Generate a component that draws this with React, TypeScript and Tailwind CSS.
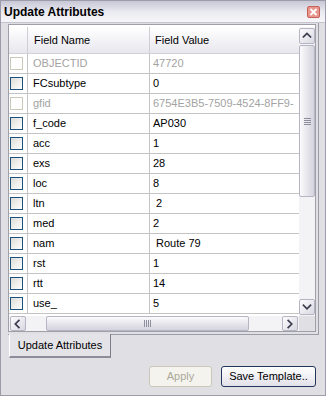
import React from 'react';

type Row = { name: string; value: string; disabled?: boolean };

const rows: Row[] = [
  { name: 'OBJECTID', value: '47720', disabled: true },
  { name: 'FCsubtype', value: '0' },
  { name: 'gfid', value: '6754E3B5-7509-4524-8FF9-', disabled: true },
  { name: 'f_code', value: 'AP030' },
  { name: 'acc', value: '1' },
  { name: 'exs', value: '28' },
  { name: 'loc', value: '8' },
  { name: 'ltn', value: ' 2' },
  { name: 'med', value: '2' },
  { name: 'nam', value: ' Route 79' },
  { name: 'rst', value: '1' },
  { name: 'rtt', value: '14' },
  { name: 'use_', value: '5' },
];

function Chevron({ dir }: { dir: 'up' | 'down' | 'left' | 'right' }) {
  const d = {
    up: 'M4 9 L8 5 L12 9',
    down: 'M4 6 L8 10 L12 6',
    left: 'M9 4 L5 8 L9 12',
    right: 'M6 4 L10 8 L6 12',
  }[dir];
  return (
    <svg width="16" height="16" viewBox="0 0 16 16" fill="none">
      <path d={d} stroke="#3c3c4e" strokeWidth="2" strokeLinecap="square" />
    </svg>
  );
}

function ScrollButton({ dir, className = '' }: { dir: 'up' | 'down' | 'left' | 'right'; className?: string }) {
  return (
    <div
      className={`flex items-center justify-center rounded-[2px] border border-[#b6b5c3] bg-gradient-to-br from-[#fdfdfe] to-[#d9d8e2] ${className}`}
    >
      <Chevron dir={dir} />
    </div>
  );
}

function Checkbox({ disabled }: { disabled?: boolean }) {
  return disabled ? (
    <div className="w-[13px] h-[13px] border border-[#cac8bb] bg-white" />
  ) : (
    <div className="w-[13px] h-[13px] border border-[#1c5180] bg-gradient-to-br from-[#dcdcd7] to-white" />
  );
}

export default function App() {
  return (
    <div className="w-[326px] h-[396px] bg-[#e0dfe3] border border-[#9d9cab] flex flex-col overflow-hidden font-['Liberation_Sans',Arial,sans-serif] text-[11px] text-black">
      {/* title bar */}
      <div className="h-[22px] flex items-center justify-between pl-[3px] pr-[5px] bg-gradient-to-b from-[#c8c7d6] via-[#e9e9f0] to-[#f7f7fa] border-b border-[#c4c3d0]">
        <span className="text-[12px] font-bold leading-none">Update Attributes</span>
        <div className="w-[13px] h-[12px] rounded-[2px] border border-[#c8605a] bg-[#e8958c] flex items-center justify-center">
          <svg width="9" height="8" viewBox="0 0 9 8">
            <path d="M1.5 1 L7.5 7 M7.5 1 L1.5 7" stroke="white" strokeWidth="1.8" />
          </svg>
        </div>
      </div>

      {/* tab page */}
      <div className="ml-[7px] w-[311px] pt-[1px] pb-[2px] pr-[1px] border-r border-b border-[#9c9ba8]">
        <div className="w-[308px] h-[308px] border border-[#9f9fa8] bg-white flex flex-col pt-[2px]">
          <div className="flex h-[289px]">
            {/* table */}
            <div className="w-[290px] overflow-hidden">
              <div className="flex h-[27px] bg-gradient-to-b from-white to-[#e8e7ee] border-b border-[#d3d2da]">
                <div className="w-[19px] shrink-0 border-r border-[#cfced7]" />
                <div className="w-[122px] shrink-0 border-r border-[#cfced7] flex items-center pl-[6px]">Field Name</div>
                <div className="flex-1 flex items-center pl-[5px]">Field Value</div>
              </div>
              {rows.map((r) => (
                <div key={r.name} className="flex h-[20px] border-b border-[#c4c4c4]">
                  <div className="w-[19px] shrink-0 border-r border-[#c4c4c4] flex items-center pl-[1px]">
                    <Checkbox disabled={r.disabled} />
                  </div>
                  <div
                    className={`w-[122px] shrink-0 border-r border-[#c4c4c4] flex items-center pl-[5px] ${
                      r.disabled ? 'text-[#a3a3a3]' : ''
                    }`}
                  >
                    {r.name}
                  </div>
                  <div
                    className={`flex-1 min-w-0 flex items-center pl-[3px] whitespace-pre overflow-hidden ${
                      r.disabled ? 'text-[#a3a3a3]' : ''
                    }`}
                  >
                    {r.value}
                  </div>
                </div>
              ))}
            </div>
            {/* vertical scrollbar */}
            <div className="w-[16px] flex flex-col bg-[#f3f3f6] pt-[1px] pb-[1px]">
              <ScrollButton dir="up" className="h-[16px]" />
              <div className="mt-[1px] h-[152px] rounded-[2px] border border-[#b6b5c3] bg-gradient-to-r from-[#fbfbfc] to-[#d4d3de] flex flex-col items-center justify-center gap-[1px]">
                <div className="w-[7px] h-[1px] bg-[#8e8d9d]" />
                <div className="w-[7px] h-[1px] bg-[#8e8d9d]" />
                <div className="w-[7px] h-[1px] bg-[#8e8d9d]" />
                <div className="w-[7px] h-[1px] bg-[#8e8d9d]" />
              </div>
              <div className="flex-1" />
              <ScrollButton dir="down" className="h-[16px]" />
            </div>
          </div>
          {/* horizontal scrollbar */}
          <div className="flex h-[15px]">
            <div className="w-[290px] flex bg-[#f3f3f6] pl-[1px] pr-[1px]">
              <ScrollButton dir="left" className="w-[16px]" />
              <div className="flex-1 flex pl-[20px] pr-[33px]">
                <div className="flex-1 rounded-[2px] border border-[#b6b5c3] bg-gradient-to-b from-[#fbfbfc] to-[#d4d3de] flex items-center justify-center gap-[1px]">
                  <div className="w-[1px] h-[7px] bg-[#8e8d9d]" />
                  <div className="w-[1px] h-[7px] bg-[#8e8d9d]" />
                  <div className="w-[1px] h-[7px] bg-[#8e8d9d]" />
                  <div className="w-[1px] h-[7px] bg-[#8e8d9d]" />
                </div>
              </div>
              <ScrollButton dir="right" className="w-[16px]" />
            </div>
            <div className="w-[16px] bg-[#e0dfe3]" />
          </div>
        </div>
      </div>

      {/* tab strip */}
      <div className="ml-[8px] -mt-[1px] flex">
        <div className="w-[102px] h-[24px] bg-[#e4e3e8] border-l border-white border-r border-r-[#7f7e8c] border-b-2 border-b-[#8d8c99] flex items-center justify-center">
          Update Attributes
        </div>
      </div>

      {/* buttons */}
      <div className="flex justify-end gap-[9px] mt-[8px] pr-[9px]">
        <div className="w-[63px] h-[21px] rounded-[3px] border border-[#cac8bb] bg-[#f4f3ee] text-[#aca899] flex items-center justify-center">
          Apply
        </div>
        <div className="w-[95px] h-[21px] rounded-[3px] border border-[#23365c] bg-gradient-to-b from-white to-[#e2e1ea] flex items-center justify-center">
          Save Template..
        </div>
      </div>
    </div>
  );
}
